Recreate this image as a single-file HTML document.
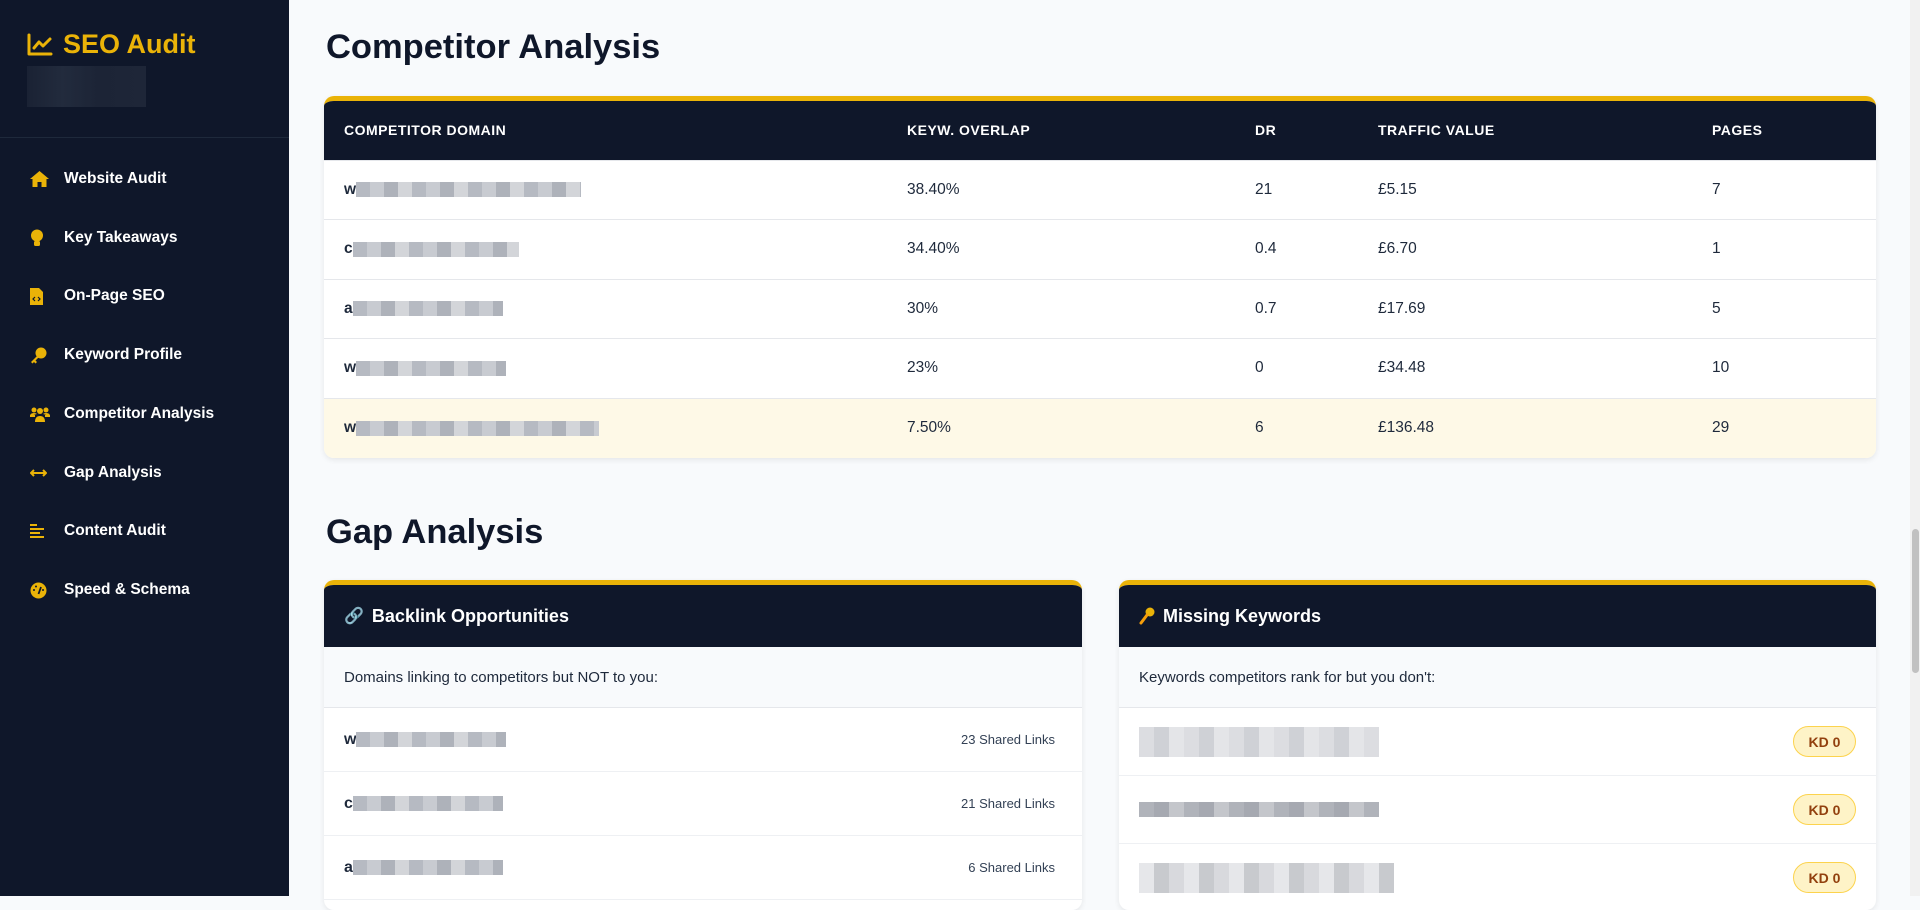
<!DOCTYPE html>
<html><head><meta charset="utf-8"><style>
*{box-sizing:border-box;margin:0;padding:0}
body{width:1920px;height:896px;overflow:hidden;background:#f8fafc;font-family:"Liberation Sans",sans-serif;color:#1e293b;position:relative}
.side{position:absolute;left:0;top:0;width:289px;height:896px;background:#0f172a}
.logo{position:absolute;left:27px;top:29px;color:#eab308;font-weight:700;font-size:27px;display:flex;align-items:center;gap:10px}
.blur{position:absolute;left:27px;top:66px;width:119px;height:41px;background:linear-gradient(90deg,#1a2234,#222b3d 30%,#1c2436 60%,#1e2638)}
.div{position:absolute;left:0;top:137px;width:289px;height:1px;background:#1e293b}
.nav{position:absolute;left:30px;display:flex;align-items:center;color:#fff;font-size:15.5px;font-weight:700;height:20px}
.nav .ic{width:24px;height:20px;margin-right:10px;display:flex;align-items:center;justify-content:flex-start}
.main{position:absolute;left:289px;top:0;right:10px;height:896px}
h1{position:absolute;font-size:34.5px;font-weight:700;color:#0f172a;left:37px}
.card{position:absolute;background:#fff;border-radius:10px;border-top:5px solid #eab308;box-shadow:0 2px 6px rgba(0,0,0,.08);overflow:hidden}
table{border-collapse:collapse;width:100%}
th{background:#0f172a;color:#fff;font-size:14px;font-weight:700;letter-spacing:.5px;text-align:left;height:59px;padding-left:20px}
td{height:59.5px;font-size:15.5px;color:#1e293b;padding-left:20px;border-top:1px solid #e5e7eb}
tr.hl td{background:#fef9e7}
.dom{display:flex;align-items:center;font-weight:700}
.px{display:inline-block;height:15px;background:repeating-linear-gradient(90deg,#b6bac2 0 14px,#c8cbd1 14px 28px,#aeb2ba 28px 42px,#d3d5d9 42px 56px)}
.ch{height:62px;background:#0f172a;color:#fff;font-size:18px;font-weight:700;display:flex;align-items:center;padding-left:20px;gap:8px}
.sub{height:61px;background:#f8fafc;border-bottom:1px solid #e5e7eb;font-size:15px;display:flex;align-items:center;padding-left:20px;color:#1e293b}
.row{display:flex;align-items:center;justify-content:space-between;padding:0 27px 0 20px;border-bottom:1px solid #eef0f3}
.row.k{padding-right:20px}
.sl{font-size:13px;color:#334155}
.kd{width:63px;height:31px;border-radius:16px;background:#fef3c7;border:1.5px solid #fcd34d;color:#92400e;font-weight:700;font-size:14px;display:flex;align-items:center;justify-content:center}
</style></head><body>
<div class="side">
 <div class="logo"><svg width="26" height="24" viewBox="0 0 26 24" fill="none" stroke="#eab308" stroke-width="3" stroke-linecap="round" stroke-linejoin="round"><path d="M2 2v19h22"/><path d="M7 15l5-6 4 4 7-7"/></svg>SEO Audit</div>
 <div class="blur"></div>
 <div class="div"></div>
 <div class="nav" style="top:169px"><span class="ic"><svg width="19" height="16" viewBox="0 0 19 16"><path d="M9.5 0L0 8h2.5v8h5v-5h4v5h5V8H19z" fill="#eab308"/></svg></span>Website Audit</div>
 <div class="nav" style="top:228px"><span class="ic"><svg width="14" height="18" viewBox="0 0 14 18"><circle cx="7" cy="6.5" r="6" fill="#eab308"/><rect x="4" y="12" width="6" height="5" rx="1.5" fill="#eab308"/></svg></span>Key Takeaways</div>
 <div class="nav" style="top:286px"><span class="ic"><svg width="13" height="17" viewBox="0 0 13 17"><path d="M0 0h9l4 4v13H0z" fill="#eab308"/><path d="M5 9l-2 2 2 2M8 9l2 2-2 2" stroke="#0f172a" stroke-width="1.2" fill="none"/></svg></span>On-Page SEO</div>
 <div class="nav" style="top:345px"><span class="ic"><svg width="17" height="17" viewBox="0 0 17 17"><circle cx="11" cy="6" r="5.5" fill="#eab308"/><path d="M7 9L1 15l1.5 1.5L4 15l1.5 1.5L7 15l-1.5-1.5L9 10z" fill="#eab308"/></svg></span>Keyword Profile</div>
 <div class="nav" style="top:404px"><span class="ic"><svg width="20" height="15" viewBox="0 0 20 15"><circle cx="4" cy="3" r="2.5" fill="#eab308"/><circle cx="10" cy="4" r="3" fill="#eab308"/><circle cx="16" cy="3" r="2.5" fill="#eab308"/><path d="M0 9q0-3 4-3 2 0 3 1M20 9q0-3-4-3-2 0-3 1M5 15q0-6 5-6t5 6z" fill="#eab308"/><rect x="0" y="8" width="5" height="2" fill="#eab308"/><rect x="15" y="8" width="5" height="2" fill="#eab308"/></svg></span>Competitor Analysis</div>
 <div class="nav" style="top:463px"><span class="ic"><svg width="17" height="10" viewBox="0 0 17 10" fill="none" stroke="#eab308" stroke-width="2"><path d="M1 5h15M4 2L1 5l3 3M13 2l3 3-3 3"/></svg></span>Gap Analysis</div>
 <div class="nav" style="top:521px"><span class="ic"><svg width="15" height="14" viewBox="0 0 15 14" fill="#eab308"><rect y="0" width="7" height="2"/><rect y="4" width="14" height="2"/><rect y="8" width="10" height="2"/><rect y="12" width="14" height="2"/></svg></span>Content Audit</div>
 <div class="nav" style="top:580px"><span class="ic"><svg width="17" height="17" viewBox="0 0 17 17"><circle cx="8.5" cy="8.5" r="8" fill="#eab308"/><path d="M8.5 12L11 5" stroke="#0f172a" stroke-width="1.8"/><circle cx="4" cy="8" r="1" fill="#0f172a"/><circle cx="6" cy="4.5" r="1" fill="#0f172a"/><circle cx="13" cy="8" r="1" fill="#0f172a"/></svg></span>Speed &amp; Schema</div>
</div>
<div style="position:absolute;left:1910px;top:0;width:10px;height:896px;background:#f1f1f1"></div>
<div style="position:absolute;left:1912px;top:529px;width:7px;height:144px;background:#c1c1c1;border-radius:4px"></div>
<div class="main">
 <h1 style="top:28px">Competitor Analysis</h1>
 <div class="card" style="left:35px;top:96px;width:1552px;height:362px">
  <table>
   <tr><th style="width:563px">COMPETITOR DOMAIN</th><th style="width:348px">KEYW. OVERLAP</th><th style="width:123px">DR</th><th style="width:334px">TRAFFIC VALUE</th><th>PAGES</th></tr>
   <tr><td><span class="dom">w<span class="px" style="width:225px"></span></span></td><td>38.40%</td><td>21</td><td>£5.15</td><td>7</td></tr>
   <tr><td><span class="dom">c<span class="px" style="width:166px"></span></span></td><td>34.40%</td><td>0.4</td><td>£6.70</td><td>1</td></tr>
   <tr><td><span class="dom">a<span class="px" style="width:150px"></span></span></td><td>30%</td><td>0.7</td><td>£17.69</td><td>5</td></tr>
   <tr><td><span class="dom">w<span class="px" style="width:150px"></span></span></td><td>23%</td><td>0</td><td>£34.48</td><td>10</td></tr>
   <tr class="hl"><td><span class="dom">w<span class="px" style="width:243px"></span></span></td><td>7.50%</td><td>6</td><td>£136.48</td><td>29</td></tr>
  </table>
 </div>
 <h1 style="top:513px">Gap Analysis</h1>
 <div class="card" style="left:35px;top:580px;width:758px;height:330px">
  <div class="ch"><span style="font-size:16px">🔗</span>Backlink Opportunities</div>
  <div class="sub">Domains linking to competitors but NOT to you:</div>
  <div class="row" style="height:64px"><span class="dom">w<span class="px" style="width:150px"></span></span><span class="sl">23 Shared Links</span></div>
  <div class="row" style="height:64px"><span class="dom">c<span class="px" style="width:150px"></span></span><span class="sl">21 Shared Links</span></div>
  <div class="row" style="height:64px"><span class="dom">a<span class="px" style="width:150px"></span></span><span class="sl">6 Shared Links</span></div>
 </div>
 <div class="card" style="left:830px;top:580px;width:757px;height:330px">
  <div class="ch"><svg width="16" height="18" viewBox="0 0 16 18"><circle cx="11" cy="5" r="4.5" fill="#eab308"/><path d="M8 8L2 16" stroke="#f59e0b" stroke-width="3" stroke-linecap="round"/></svg>Missing Keywords</div>
  <div class="sub">Keywords competitors rank for but you don't:</div>
  <div class="row k" style="height:68px"><span class="px" style="width:240px;height:30px;background:repeating-linear-gradient(90deg,#dcdde1 0 15px,#cfd1d6 15px 30px,#e4e5e8 30px 45px)"></span><span class="kd">KD 0</span></div>
  <div class="row k" style="height:68px"><span class="px" style="width:240px;height:15px;background:repeating-linear-gradient(90deg,#b0b3ba 0 15px,#a6a9b1 15px 30px,#c4c6cb 30px 45px)"></span><span class="kd">KD 0</span></div>
  <div class="row k" style="height:68px"><span class="px" style="width:255px;height:30px;background:repeating-linear-gradient(90deg,#e6e7ea 0 15px,#c8cace 15px 30px,#d8d9dd 30px 45px)"></span><span class="kd">KD 0</span></div>
 </div>
</div>
</body></html>
